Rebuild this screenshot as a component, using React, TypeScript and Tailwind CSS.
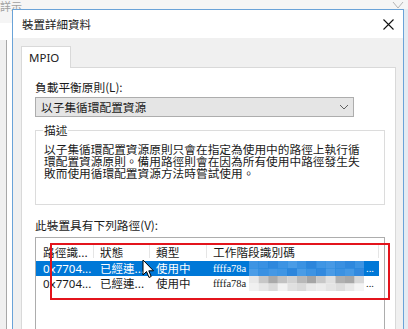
import React from "react";

const CJK = "font-['Noto_Sans_CJK_TC','Noto_Sans',sans-serif]";

const BLUE_MOSAIC = [
  ["#3d94e3", "#3a91e2", "#2f88dd", "#3c93e3", "#4a9ce6", "#3b92e2", "#2c85db", "#3f95e4", "#4799e5", "#3a90e1", "#2f88dd", "#3d94e3"],
  ["#4b9de7", "#3a91e2", "#4598e5", "#3f95e4", "#2d86dc", "#4a9ce6", "#3d93e3", "#3289de", "#4a9be6", "#3c92e2", "#4699e5", "#3389de"],
];
const GRAY_MOSAIC = [
  ["#e8e8e8", "#c7c7c7", "#aaaaaa", "#c2c2c2", "#d2d2d2", "#b8b8b8", "#a5a5a5", "#c8c8c8", "#e0e0e0", "#b0b0b0", "#a8a8a8", "#d8d8d8"],
  ["#f0f0f0", "#e6e6e6", "#dadada", "#f2f2f2", "#e0e0e0", "#d9d9d9", "#e8e8e8", "#ececec", "#e4e4e4", "#dcdcdc", "#e8e8e8", "#f4f4f4"],
];

const ROWS = [
  { id: "0x7704...", state: "已經連...", type: "使用中", sess: "ffffa78a", selected: true, mosaic: BLUE_MOSAIC },
  { id: "0x7704...", state: "已經連...", type: "使用中", sess: "ffffa78a", selected: false, mosaic: GRAY_MOSAIC },
];

function Mosaic({ grid }: { grid: string[][] }) {
  return (
    <svg width="115" height="15" viewBox="0 0 115 15" className="absolute left-[42px] top-0">
      {grid.map((row, r) =>
        row.map((c, i) => (
          <rect key={r + "-" + i} x={i * 9.6} y={r * 7.5} width="9.7" height="7.6" fill={c} />
        ))
      )}
    </svg>
  );
}

export default function App() {
  return (
    <div className={`relative w-[408px] h-[329px] overflow-hidden bg-[#f5f5f5] ${CJK}`}>
      {/* background window bits */}
      <div className="absolute left-0 top-0 text-[11px] leading-[12px] text-[#a0a0a0]">詳示</div>
      <div className="absolute left-0 top-[23px] w-[12px] h-[306px] bg-white" />
      <div className="absolute left-0 top-[40px] w-[7px] h-[289px] bg-[#f0f0f0] border-r border-[#a8a8a8]" />
      <div className="absolute left-[404px] top-[9px] w-[4px] h-[320px] bg-[#e4ebf2]" />
      <svg width="12" height="8" viewBox="0 0 12 8" className="absolute left-[392px] top-[1px]">
        <path d="M1 1 L6 7 L11 1" fill="none" stroke="#b5b5b5" strokeWidth="1" />
      </svg>

      {/* dialog */}
      <div className="absolute left-[12px] top-[9px] w-[392px] h-[330px] border border-[#6aa3d8] bg-[#f0f0f0] flex flex-col">
        <div className="h-[29px] bg-white flex items-center justify-between pl-[9px] pr-[9px]">
          <span className="text-[11.5px] leading-[12px] text-[#1a1a1a]">裝置詳細資料</span>
          <svg width="11" height="11" viewBox="0 0 11 11">
            <path d="M0.5 0.5 L10.5 10.5 M10.5 0.5 L0.5 10.5" stroke="#111" strokeWidth="1.1" />
          </svg>
        </div>

        <div className="flex-1 flex flex-col pl-[8px] pr-[7px] pt-[8px]">
          <div className="relative z-10 -mb-px w-[50px] h-[22px] bg-white border border-b-0 border-[#d9d9d9] flex items-center pl-[7px]">
            <span className="font-['Noto_Sans',sans-serif] text-[11.5px] text-[#222]">MPIO</span>
          </div>

          <div className="flex-1 bg-white border border-[#d9d9d9] pl-[13px] pt-[13px] flex flex-col text-[#1a1a1a]">
            <div className="text-[11.7px] leading-[12px]">負載平衡原則(L):</div>

            <div className="mt-[4px] w-[319px] h-[20px] bg-[#e5e5e5] border border-[#adadad] flex items-center justify-between pl-[5px] pr-[4px]">
              <span className="text-[11.7px] leading-[12px]">以子集循環配置資源</span>
              <svg width="10" height="6" viewBox="0 0 10 6">
                <path d="M1 1 L5 5 L9 1" fill="none" stroke="#606060" strokeWidth="1" />
              </svg>
            </div>

            <div className="relative mt-[13px] w-[350px] h-[75px] border border-[#dcdcdc] pl-[8px] pt-[12px]">
              <span className="absolute left-[7px] -top-[7px] bg-white px-[1px] text-[11.7px] leading-[12px]">描述</span>
              <p className="text-[11.7px] leading-[12px]">
                以子集循環配置資源原則只會在指定為使用中的路徑上執行循
                <br />
                環配置資源原則。備用路徑則會在因為所有使用中路徑發生失
                <br />
                敗而使用循環配置資源方法時嘗試使用。
              </p>
            </div>

            <div className="mt-[14px] text-[11.7px] leading-[12px]">此裝置具有下列路徑(V):</div>

            <div className="mt-[6px] w-[350px] h-[100px] border border-[#adadad] bg-white">
              <div className="h-[23px] flex text-[11.7px]">
                <div className="w-[58px] mt-[7px] h-[13px] leading-[13px] pl-[7px] border-r border-[#e5e5e5]">路徑識...</div>
                <div className="w-[56px] mt-[7px] h-[13px] leading-[13px] pl-[6px] border-r border-[#e5e5e5]">狀態</div>
                <div className="w-[57px] mt-[7px] h-[13px] leading-[13px] pl-[6px] border-r border-[#e5e5e5]">類型</div>
                <div className="w-[172px] mt-[7px] h-[13px] leading-[13px] pl-[6px] border-r border-[#e5e5e5]">工作階段識別碼</div>
              </div>
              {ROWS.map((r, i) => (
                <div
                  key={i}
                  className={`w-[343px] h-[15px] flex items-center text-[11.5px] leading-[15px] ${r.selected ? "bg-[#0078d7] text-white" : "text-[#1a1a1a]"}`}
                >
                  <div className="w-[58px] pl-[7px] font-['Noto_Sans',sans-serif]">{r.id}</div>
                  <div className="w-[56px] pl-[6px]">{r.state}</div>
                  <div className="w-[57px] pl-[6px]">{r.type}</div>
                  <div className="relative flex-1 h-[15px] pl-[6px] font-['Liberation_Serif',serif] text-[10.5px] leading-[15px]">
                    {r.sess}
                    <Mosaic grid={r.mosaic} />
                    <span className="absolute left-[159px] top-0">...</span>
                  </div>
                </div>
              ))}
            </div>
          </div>
        </div>
      </div>

      {/* annotation box */}
      <div className="absolute left-[50px] top-[243px] w-[340px] h-[57px] border-2 border-[#e3141c]" />

      {/* mouse cursor */}
      <svg width="13" height="20" viewBox="0 0 13 20" className="absolute left-[142px] top-[259px]">
        <path d="M1 1 L1 16 L4.5 12.5 L7 18.5 L9.2 17.5 L6.8 11.8 L11.5 11.8 Z" fill="#fff" stroke="#000" strokeWidth="1" strokeLinejoin="round" />
      </svg>
    </div>
  );
}
